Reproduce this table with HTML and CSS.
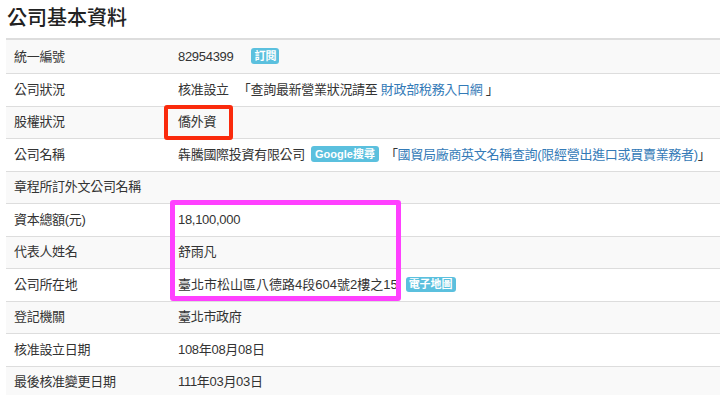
FILE: index.html
```html
<!DOCTYPE html>
<html lang="zh-Hant">
<head>
<meta charset="utf-8">
<title>公司基本資料</title>
<link rel="stylesheet" href="styles.css">
</head>
<body>
<div class="page">
  <h1 class="title">公司基本資料</h1>
  <div class="table-wrap">
    <table class="info">
      <colgroup><col class="c-key"><col class="c-val"></colgroup>
      <tr class="first"><td class="k">統一編號</td><td class="v">82954399<span class="badge badge-sub">訂閱</span></td></tr>
      <tr><td class="k">公司狀況</td><td class="v">核准設立<span class="q">「查詢最新營業狀況請至 <a href="#">財政部稅務入口網</a> 」</span></td></tr>
      <tr><td class="k">股權狀況</td><td class="v">僑外資</td></tr>
      <tr><td class="k">公司名稱</td><td class="v">犇騰國際投資有限公司<span class="badge badge-g">Google搜尋</span><span class="q2">「<a href="#">國貿局廠商英文名稱查詢(限經營出進口或買賣業務者)</a>」</span></td></tr>
      <tr><td class="k">章程所訂外文公司名稱</td><td class="v"></td></tr>
      <tr><td class="k">資本總額(元)</td><td class="v">18,100,000</td></tr>
      <tr><td class="k">代表人姓名</td><td class="v">舒雨凡</td></tr>
      <tr><td class="k">公司所在地</td><td class="v"><span class="addr">臺北市松山區八德路4段604號2樓之15</span><span class="badge badge-map">電子地圖</span></td></tr>
      <tr><td class="k">登記機關</td><td class="v">臺北市政府</td></tr>
      <tr><td class="k">核准設立日期</td><td class="v">108年08月08日</td></tr>
      <tr><td class="k">最後核准變更日期</td><td class="v">111年03月03日</td></tr>
    </table>
    <div class="mark mark-red"></div>
    <div class="mark mark-pink"></div>
  </div>
</div>
</body>
</html>
```
FILE: styles.css
```css
html, body {
  margin: 0;
  padding: 0;
  background: #fff;
}
body {
  font-family: "Liberation Sans", "Noto Sans CJK TC", sans-serif;
  font-size: 13px;
  color: #333;
  overflow: hidden;
}
.page {
  padding: 3px 0 0 6px;
}
.title {
  margin: 0 0 7px 1px;
  font-size: 20px;
  line-height: 28px;
  font-weight: 500;
  font-family: "Noto Sans CJK TC", sans-serif;
  color: #222;
}
.table-wrap {
  position: relative;
}
.info {
  width: 100%;
  table-layout: fixed;
  border-collapse: separate;
  border-spacing: 0;
  letter-spacing: -0.3px;
}
.c-key {
  width: 164px;
}
.info td {
  border-top: 1px solid #ddd;
  height: 31.5px;
  padding: 0 8px;
  vertical-align: middle;
  line-height: 18px;
  white-space: nowrap;
  overflow: visible;
}
.info tr.first td {
  border-top-width: 2px;
  height: 33px;
}
.info tr:nth-child(odd) td {
  background: #f9f9f9;
}
a {
  color: #337ab7;
  text-decoration: none;
}
.q {
  margin-left: 9px;
}
.q2 {
  margin-left: 6px;
}
.addr {
  letter-spacing: 0;
}
.badge {
  display: inline-block;
  vertical-align: 1px;
  background: #5bc0de;
  color: #fff;
  font-size: 11px;
  font-weight: bold;
  line-height: 16px;
  padding: 0 3px;
  border-radius: 3px;
  letter-spacing: 0;
}
.badge-sub {
  margin-left: 18px;
}
.badge-g {
  margin-left: 6px;
  padding: 0 4px;
}
.badge-map {
  margin-left: 8px;
  padding: 0 3px;
  line-height: 15px;
}
.mark {
  position: absolute;
  box-sizing: border-box;
  border-style: solid;
  border-radius: 3px;
}
.mark-red {
  left: 158px;
  top: 67px;
  width: 69px;
  height: 35px;
  border-width: 4px;
  border-color: #fa2a0c;
}
.mark-pink {
  left: 164px;
  top: 162px;
  width: 231px;
  height: 101px;
  border-width: 5px;
  border-color: #ff40ff;
}
```
